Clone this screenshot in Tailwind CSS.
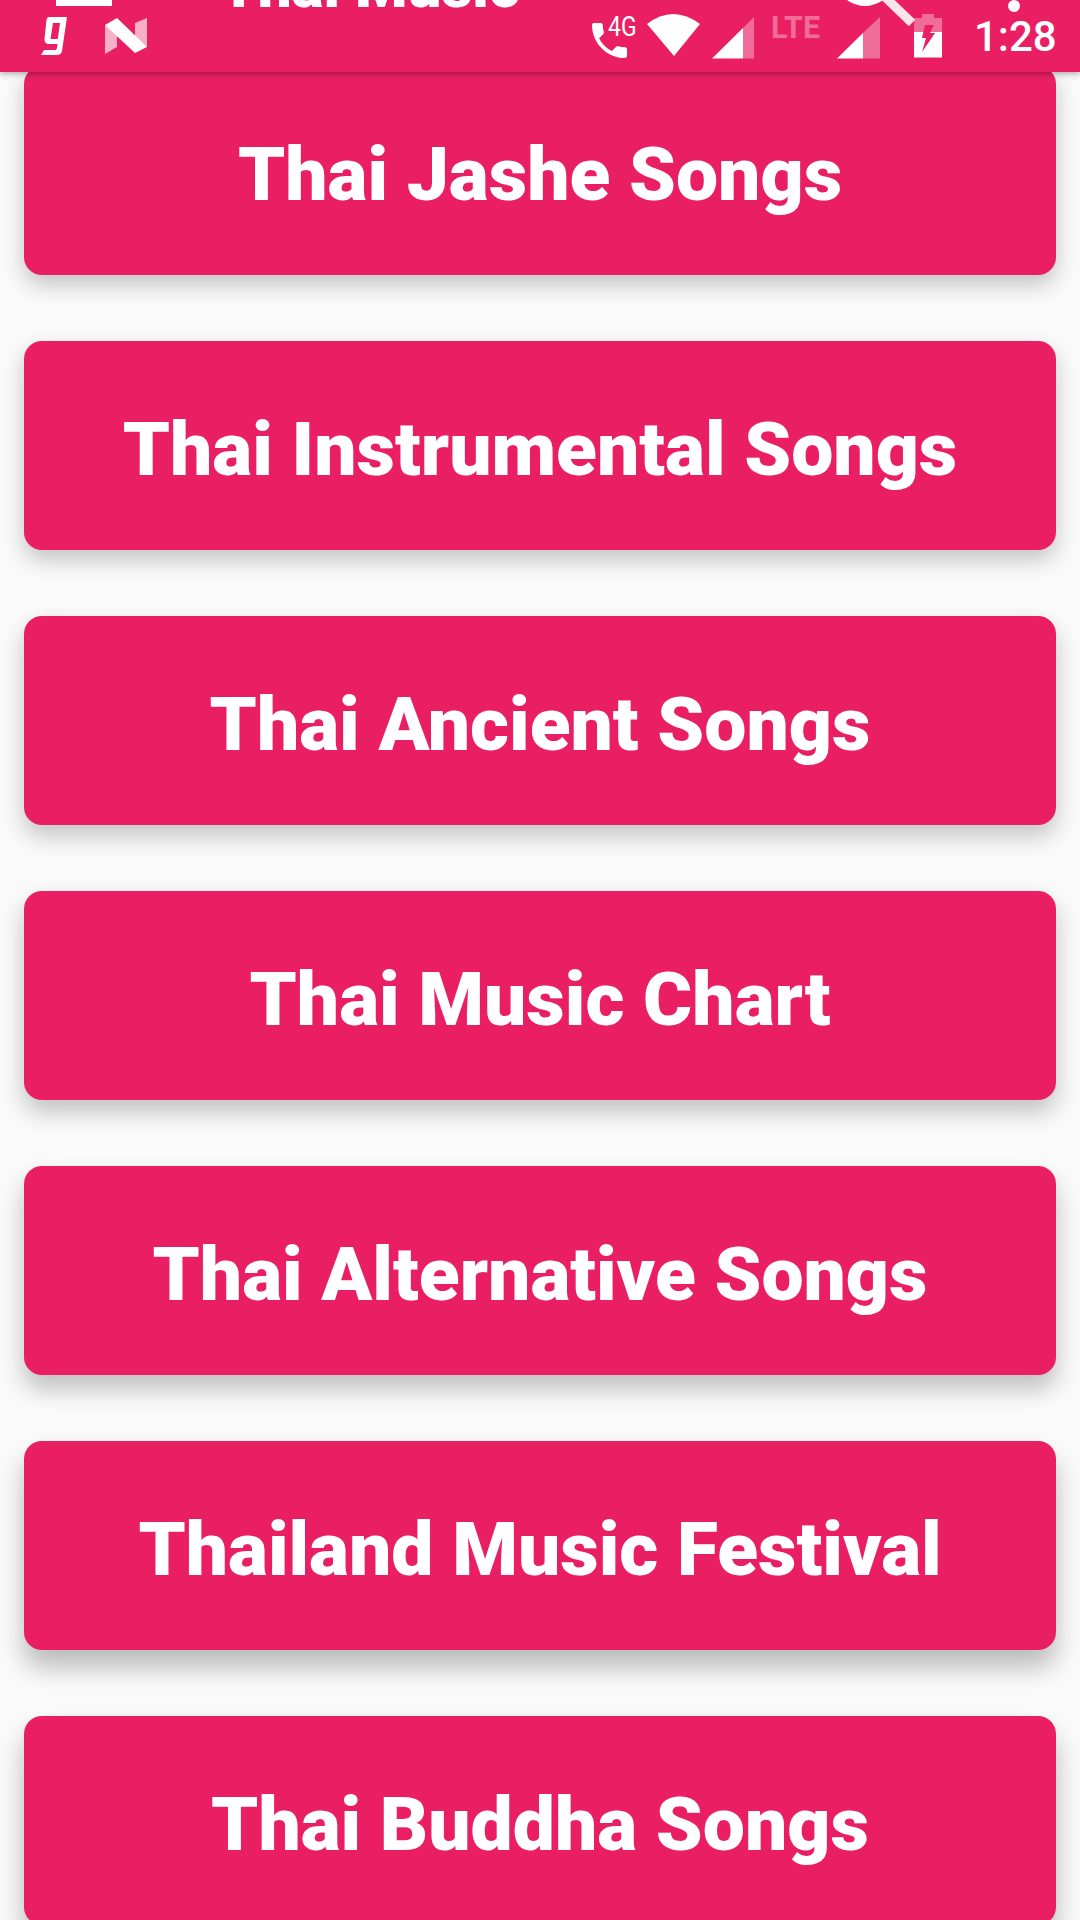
<!DOCTYPE html>
<html><head><meta charset="utf-8">
<script src="https://cdn.jsdelivr.net/npm/@tailwindcss/browser@4"></script>
</head>
<body class="bg-[#fafafa]">
<div class="relative w-[1080px] h-[1920px] overflow-hidden bg-[#fafafa] font-['Roboto',sans-serif]">
  <main class="flex flex-col gap-[66px] pt-[66px] px-[24px]">
    <button class="h-[209px] shrink-0 rounded-[18px] bg-[#ea1f63] pt-[8px] text-white font-black text-[75px] shadow-[0_10px_22px_rgba(0,0,0,0.22)]">Thai Jashe Songs</button>
    <button class="h-[209px] shrink-0 rounded-[18px] bg-[#ea1f63] pt-[8px] text-white font-black text-[75px] shadow-[0_10px_22px_rgba(0,0,0,0.22)]">Thai Instrumental Songs</button>
    <button class="h-[209px] shrink-0 rounded-[18px] bg-[#ea1f63] pt-[8px] text-white font-black text-[75px] shadow-[0_11px_23px_rgba(0,0,0,0.22)]">Thai Ancient Songs</button>
    <button class="h-[209px] shrink-0 rounded-[18px] bg-[#ea1f63] pt-[8px] text-white font-black text-[75px] shadow-[0_12px_24px_rgba(0,0,0,0.23)]">Thai Music Chart</button>
    <button class="h-[209px] shrink-0 rounded-[18px] bg-[#ea1f63] pt-[8px] text-white font-black text-[75px] shadow-[0_14px_25px_rgba(0,0,0,0.24)]">Thai Alternative Songs</button>
    <button class="h-[209px] shrink-0 rounded-[18px] bg-[#ea1f63] pt-[8px] text-white font-black text-[75px] shadow-[0_17px_26px_rgba(0,0,0,0.26)]">Thailand Music Festival</button>
    <button class="h-[209px] shrink-0 rounded-[18px] bg-[#ea1f63] pt-[8px] text-white font-black text-[75px] shadow-[0_18px_27px_rgba(0,0,0,0.26)]">Thai Buddha Songs</button>
  </main>
  <header class="absolute top-0 left-0 w-[1080px] h-[72px] bg-[#ea1f63] overflow-hidden shadow-[0_2px_6px_rgba(0,0,0,0.3)]">
    <div class="absolute left-[56px] top-0 w-[56px] h-[6px] bg-white"></div>
    <div class="absolute left-[220px] top-[-48px] text-white font-black text-[60px] leading-[70px] whitespace-nowrap">Thai Music</div>
    <svg class="absolute left-0 top-0" width="1080" height="72" viewBox="0 0 1080 72">
      <path fill="#fff" fill-rule="evenodd" d="M49 17H67L62 51Q61 55 57 55H41L44 50H55Q56.500 50 57 48L57.500 44H49Q44 44 44.500 39L46.500 20Q47 17 49 17ZM53 23 50.500 39H57.800L60 23Z"/>
      <path fill="#fff" fill-opacity=".65" d="M105 25 117 33V47L105 54Z"/>
      <path fill="#fff" fill-opacity=".65" d="M147 18V47L135 40V23Z"/>
      <path fill="#fff" d="M105 25 117 18 147 47 135 53Z"/>
      <path fill="#fff" transform="translate(586.200 17.200) scale(1.944)" d="M6.620 10.790c1.440 2.830 3.760 5.140 6.590 6.590l2.200-2.200c.27-.27.67-.36 1.020-.24 1.120.37 2.330.57 3.570.57.55 0 1 .45 1 1V20c0 .55-.45 1-1 1-9.390 0-17-7.610-17-17 0-.55.45-1 1-1h3.500c.55 0 1 .45 1 1 0 1.250.2 2.450.57 3.570.11.35.03.74-.25 1.020l-2.200 2.200z"/>
      <path fill="#fff" d="M647 24Q673 4 700 24L674 56Z"/>
      <path fill="#fff" d="M712 58.500 743 28V58.500Z"/>
      <path fill="#fff" fill-opacity=".35" d="M743 28 754 17V58.500H743Z"/>
      <path fill="#fff" d="M837 58.500 863 33V58.500Z"/>
      <path fill="#fff" fill-opacity=".35" d="M863 33 880 17V58.500H863Z"/>
      <path fill="none" stroke="#fff" stroke-width="6" d="M849 -2Q865 8 881 -2"/>
      <path stroke="#fbe4ec" stroke-width="9" d="M885 -3 912 23"/>
      <path fill="#fff" fill-opacity=".35" d="M914 18H922V14H934V18H942V32H914Z"/>
      <path fill="#fff" d="M914 32H942V57.500H914Z"/>
      <path fill="#ea1f63" d="M925 25H934L930 33H935L922 52 926 38H922Z"/>
      <circle cx="1014" cy="6" r="6" fill="#fff"/>
    </svg>
    <span class="absolute left-[608px] top-[11px] text-white text-[27px] leading-[32px] scale-x-[.85] origin-left">4G</span>
    <span class="absolute left-[771px] top-[9px] text-white/35 text-[32px] leading-[36px] font-bold scale-x-[.95] origin-left">LTE</span>
    <span class="absolute left-[974px] top-[15px] text-white font-medium text-[42px] leading-[44px]">1:28</span>
  </header>
</div>
</body></html>
